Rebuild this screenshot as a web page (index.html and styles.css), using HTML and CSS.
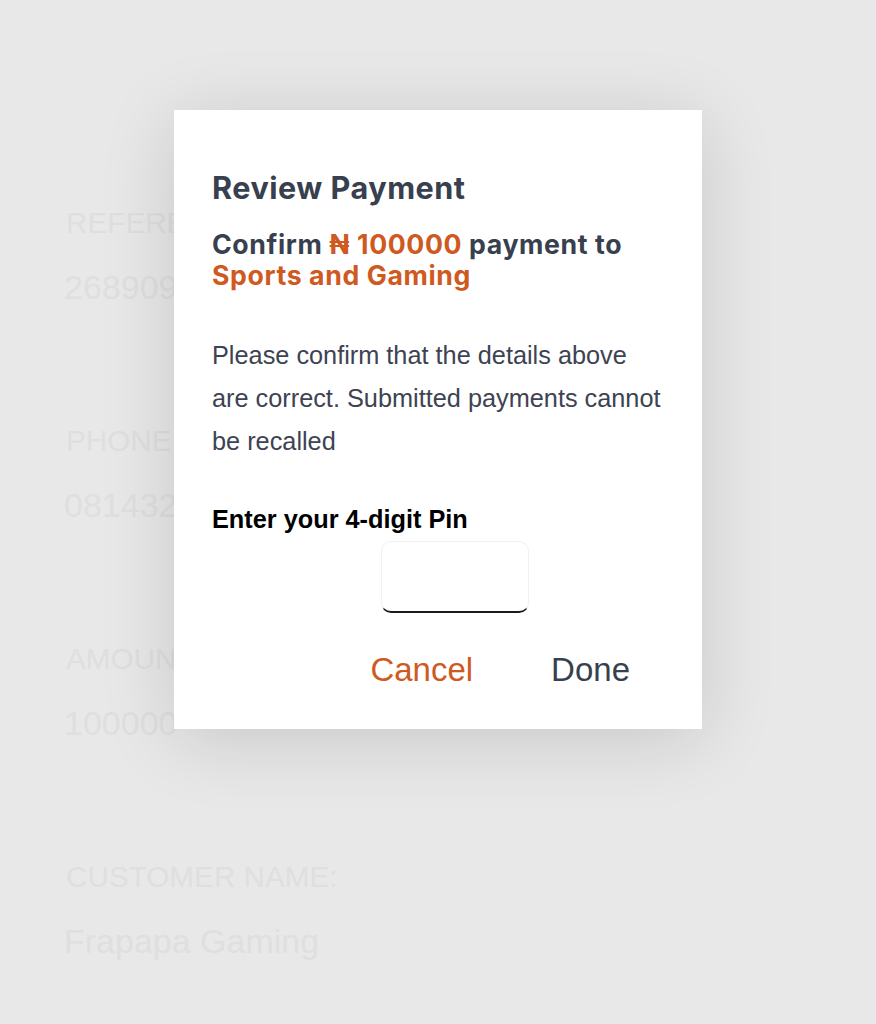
FILE: index.html
```html
<!DOCTYPE html>
<html lang="en">
<head>
    <meta charset="UTF-8">
    <meta name="viewport" content="width=device-width, initial-scale=1.0">
    <title>Review Payment</title>
    <link rel="stylesheet" href="styles.css">
</head>
<body>
    <!-- Pantalla de detalles (detrás del modal) -->
    <div class="details">
        <div class="field">
            <div class="label">REFERENCE:</div>
            <div class="value">26890912</div>
        </div>
        <div class="field">
            <div class="label">PHONE NUMBER:</div>
            <div class="value">08143200000</div>
        </div>
        <div class="field">
            <div class="label">AMOUNT:</div>
            <div class="value">100000</div>
        </div>
        <div class="field">
            <div class="label">CUSTOMER NAME:</div>
            <div class="value">Frapapa Gaming</div>
        </div>
    </div>

    <!-- Modal de confirmación -->
    <div class="overlay">
        <div class="modal">
            <h1 class="modal-title">Review Payment</h1>
            <p class="modal-confirm">Confirm <span class="accent">₦ 100000</span> payment to<br><span class="accent">Sports and Gaming</span></p>
            <p class="modal-text">Please confirm that the details above<br>are correct. Submitted payments cannot<br>be recalled</p>
            <div class="pin-label">Enter your 4-digit Pin</div>
            <input class="pin-input" type="password" maxlength="4">
            <div class="modal-actions">
                <button class="btn btn-cancel">Cancel</button>
                <button class="btn btn-done">Done</button>
            </div>
        </div>
    </div>
</body>
</html>
```
FILE: styles.css
```css
body {
    margin: 0;
    height: 1024px;
    background: #e8e8e8;
    font-family: "Liberation Sans", Arial, sans-serif;
    overflow: hidden;
    position: relative;
}
.details {
    padding: 206px 0 0 66px;
}
.field {
    margin-bottom: 117px;
}
.field:last-child {
    margin-bottom: 0;
}
.label {
    font-size: 29.7px;
    line-height: 34px;
    color: #dfdfdf;
    margin-bottom: 27px;
}
.value {
    font-size: 34px;
    line-height: 40px;
    color: #dfdfdf;
    margin-left: -2px;
}
.overlay {
    position: absolute;
    top: 0;
    left: 0;
    right: 0;
    bottom: 0;
    display: flex;
    justify-content: center;
    align-items: flex-start;
    padding-top: 110px;
}
.modal {
    width: 528px;
    height: 619px;
    box-sizing: border-box;
    background: #fff;
    padding: 60px 30px 0 38px;
    box-shadow: 0 10px 70px rgba(0, 0, 0, 0.14);
}
.modal-title {
    margin: 0;
    font-family: Inter, "Noto Sans", sans-serif;
    font-size: 30.6px;
    line-height: 36px;
    font-weight: 700;
    letter-spacing: 0.5px;
    color: #383f4e;
}
.modal-confirm {
    margin: 23px 0 0;
    font-family: Inter, "Noto Sans", sans-serif;
    font-size: 26.7px;
    line-height: 31px;
    font-weight: 700;
    letter-spacing: 0.6px;
    color: #383f4e;
    white-space: nowrap;
}
.accent {
    color: #cf5a1f;
}
.modal-text {
    margin: 43px 0 0;
    font-size: 25.3px;
    line-height: 43px;
    color: #3d4352;
    white-space: nowrap;
}
.pin-label {
    margin-top: 42px;
    font-size: 25.3px;
    line-height: 28px;
    font-weight: 700;
    color: #000;
}
.pin-input {
    display: block;
    margin: 8px 0 0 169px;
    width: 148px;
    height: 72px;
    box-sizing: border-box;
    border: 1px solid #f1f1f1;
    border-bottom: 2px solid #1a1a1a;
    border-radius: 10px;
    outline: none;
    background: #fff;
}
.modal-actions {
    display: flex;
    justify-content: flex-end;
    gap: 78px;
    margin: 37px 42px 0 0;
}
.btn {
    border: none;
    background: none;
    padding: 0;
    font-family: "Liberation Sans", Arial, sans-serif;
    font-size: 33px;
    line-height: 40px;
    cursor: pointer;
}
.btn-cancel {
    color: #cf5a1f;
}
.btn-done {
    color: #383f4e;
}
```
